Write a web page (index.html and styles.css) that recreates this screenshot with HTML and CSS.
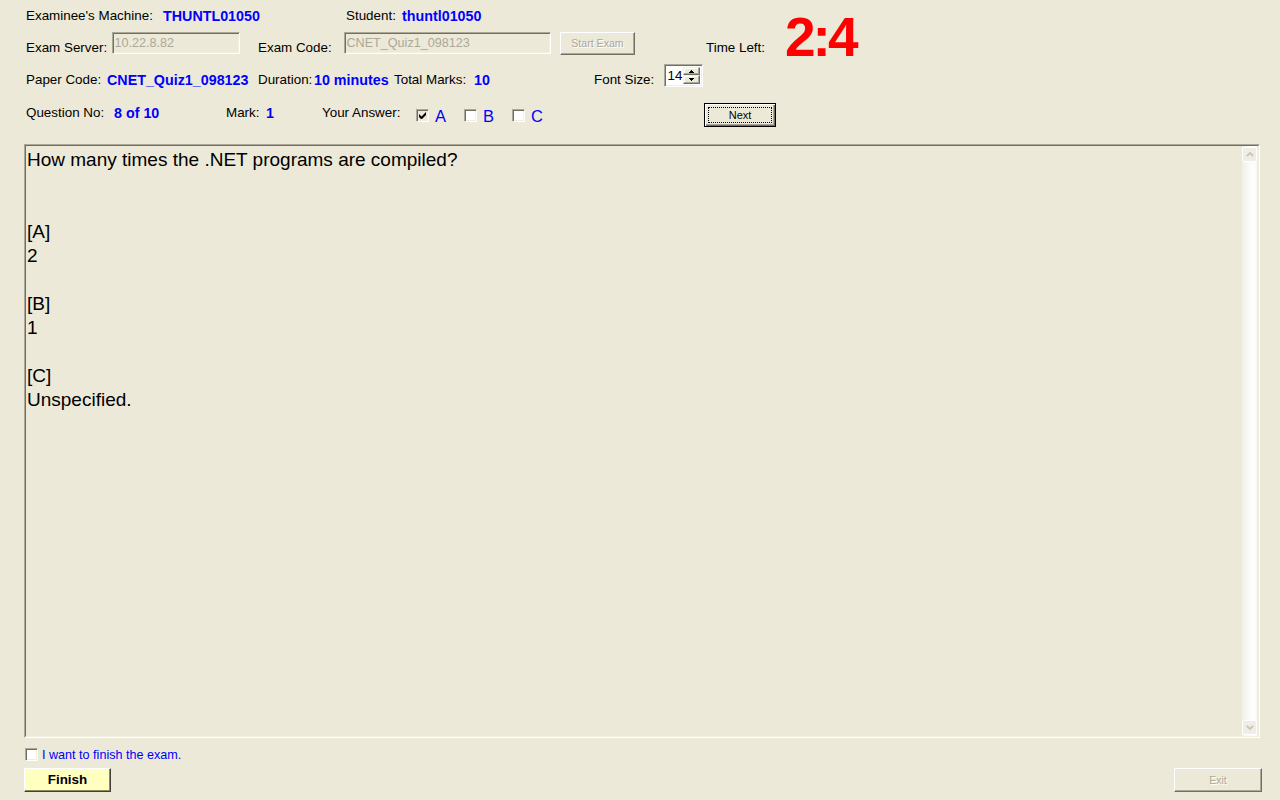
FILE: index.html
```html
<!DOCTYPE html>
<html>
<head>
<meta charset="utf-8">
<title>Exam</title>
<link rel="stylesheet" href="styles.css">
</head>
<body>
<div class="window">
  <header class="header">
    <div class="top">
      <div class="top-left">
        <div class="row row-1">
          <span class="label w-137">Examinee's Machine:</span>
          <span class="value w-183">THUNTL01050</span>
          <span class="label w-56">Student:</span>
          <span class="value">thuntl01050</span>
        </div>
        <div class="row row-2">
          <span class="label w-86">Exam Server:</span>
          <div class="field field-server">10.22.8.82</div>
          <span class="label w-86 gap-18">Exam Code:</span>
          <div class="field field-code">CNET_Quiz1_098123</div>
          <button class="btn btn-disabled btn-start">Start Exam</button>
        </div>
      </div>
      <span class="label time-label">Time Left:</span>
      <span class="timer">2:4</span>
    </div>

    <div class="row row-3">
      <span class="label w-81">Paper Code:</span>
      <span class="value w-151">CNET_Quiz1_098123</span>
      <span class="label w-56">Duration:</span>
      <span class="value w-80">10 minutes</span>
      <span class="label w-80">Total Marks:</span>
      <span class="value w-120">10</span>
      <span class="label w-70">Font Size:</span>
      <div class="spin">
        <span class="spin-value">14</span>
        <div class="spin-buttons">
          <span class="spin-btn"><svg width="5" height="3" viewBox="0 0 5 3"><path d="M2 0h1v1h1v1h1v1H0V2h1V1h1z" fill="#000"/></svg></span>
          <span class="spin-btn"><svg width="5" height="3" viewBox="0 0 5 3"><path d="M0 0h5v1H4v1H3v1H2V2H1V1H0z" fill="#000"/></svg></span>
        </div>
      </div>
    </div>

    <div class="row row-4">
      <span class="label w-88 pad-label">Question No:</span>
      <span class="value w-112 pad-value">8 of 10</span>
      <span class="label w-40 pad-label">Mark:</span>
      <span class="value w-56 pad-value">1</span>
      <span class="label w-94 pad-label">Your Answer:</span>
      <div class="answers">
        <label class="option">
          <span class="check check-on"><svg width="7" height="7" viewBox="0 0 7 7"><path d="M0 2v3l2 2h1l4-4V0L2.5 4.5z" fill="#000"/></svg></span>
          <span class="option-letter">A</span>
        </label>
        <label class="option">
          <span class="check"></span>
          <span class="option-letter">B</span>
        </label>
        <label class="option">
          <span class="check"></span>
          <span class="option-letter">C</span>
        </label>
      </div>
      <button class="btn btn-default">Next</button>
    </div>
  </header>

  <main class="question-box">
    <div class="question-inner">
      <div class="question-text">How many times the .NET programs are compiled?


[A]
2

[B]
1

[C]
Unspecified.</div>
      <div class="scrollbar">
        <span class="sb-btn"><svg width="8" height="5" viewBox="0 0 8 5"><polyline points="0.8,4.2 4,1 7.2,4.2" fill="none" stroke="#c8c5b6" stroke-width="1.8"/></svg></span>
        <span class="sb-track"></span>
        <span class="sb-btn"><svg width="8" height="5" viewBox="0 0 8 5"><polyline points="0.8,0.8 4,4 7.2,0.8" fill="none" stroke="#c8c5b6" stroke-width="1.8"/></svg></span>
      </div>
    </div>
  </main>

  <footer class="footer">
    <label class="finish-check">
      <span class="check"></span>
      <span class="finish-text">I want to finish the exam.</span>
    </label>
    <div class="footer-buttons">
      <button class="btn btn-finish">Finish</button>
      <button class="btn btn-disabled btn-exit">Exit</button>
    </div>
  </footer>
</div>
</body>
</html>
```

FILE: styles.css
```css
html, body {
  margin: 0;
  padding: 0;
  background: #ece9d8;
}

body {
  font-family: "Liberation Sans", Arial, sans-serif;
  color: #000;
}

.window {
  width: 1280px;
  height: 800px;
  overflow: hidden;
  box-sizing: border-box;
  padding-left: 24px;
}

/* ---------- header ---------- */
.header {
  padding-left: 2px;
}

.top {
  display: flex;
  align-items: flex-start;
  height: 56.4px;
}

.top-left {
  width: 654px;
  display: flex;
  flex-direction: column;
}

.row {
  display: flex;
}

.row-1 {
  height: 24.4px;
  align-items: flex-end;
}

.row-2 {
  height: 24.4px;
  margin-top: 7.6px;
  align-items: flex-end;
}

.row-3 {
  height: 24.4px;
  margin-top: 7.6px;
  align-items: flex-end;
}

.row-4 {
  height: 24px;
  margin-top: 14.6px;
  align-items: flex-start;
}

.label {
  font-size: 13.4px;
  line-height: 16px;
  white-space: nowrap;
  flex-shrink: 0;
}

.value {
  font-size: 14.3px;
  line-height: 16px;
  font-weight: bold;
  color: #0000ff;
  white-space: nowrap;
  flex-shrink: 0;
}

.pad-label { padding-top: 2px; }
.pad-value { padding-top: 1.6px; }

.w-40 { width: 40px; }
.w-56 { width: 56px; }
.w-70 { width: 70px; }
.w-80 { width: 80px; }
.w-81 { width: 81px; }
.w-86 { width: 86px; }
.w-88 { width: 88px; }
.w-94 { width: 94px; }
.w-112 { width: 112px; }
.w-120 { width: 120px; }
.w-137 { width: 137px; }
.w-151 { width: 151px; }
.w-183 { width: 183px; }
.gap-18 { margin-left: 18px; }

.field {
  align-self: flex-start;
  box-sizing: border-box;
  height: 22px;
  border: 1px solid;
  border-color: #aca899 #ffffff #ffffff #aca899;
  box-shadow: inset 1px 1px 0 #716f64, inset -1px -1px 0 #f1efe2;
  background: #ece9d8;
  color: #aca899;
  font-size: 12.6px;
  line-height: 12px;
  padding: 4px 2px 0 1.5px;
  white-space: nowrap;
  flex-shrink: 0;
}

.field-server { width: 128px; }
.field-code { width: 207px; }

.time-label {
  align-self: flex-end;
  margin-left: 26px;
  width: 79px;
}

.timer {
  align-self: flex-start;
  margin-top: 9px;
  font-size: 55px;
  line-height: 56px;
  font-weight: bold;
  color: #ff0000;
  letter-spacing: -3px;
  white-space: nowrap;
}

/* ---------- buttons ---------- */
.btn {
  box-sizing: border-box;
  font-family: "Liberation Sans", Arial, sans-serif;
  background: #ece9d8;
  border: 1px solid;
  border-color: #ffffff #716f64 #716f64 #ffffff;
  box-shadow: inset -1px -1px 0 #aca899;
  padding: 0;
  margin: 0;
  font-size: 10.6px;
  color: #000;
  flex-shrink: 0;
}

.btn-disabled {
  color: #aca899;
  text-shadow: 1px 1px 0 #ffffff;
}

.btn-start {
  align-self: flex-start;
  width: 75px;
  height: 23px;
  margin-left: 9px;
}

.btn-default {
  position: relative;
  width: 72px;
  height: 24px;
  border: 1px solid #000;
  box-shadow: inset 1px 1px 0 #ffffff, inset -1px -1px 0 #716f64, inset -2px -2px 0 #aca899;
  font-size: 11px;
}

.btn-default::after {
  content: "";
  position: absolute;
  left: 3px;
  top: 3px;
  right: 3px;
  bottom: 3px;
  border: 1px dotted #000;
}

/* ---------- spin ---------- */
.spin {
  align-self: flex-start;
  box-sizing: border-box;
  width: 39px;
  height: 23px;
  border: 1px solid;
  border-color: #aca899 #ffffff #ffffff #aca899;
  box-shadow: inset 1px 1px 0 #716f64, inset -1px -1px 0 #f1efe2;
  background: #ffffff;
  display: flex;
  padding: 2px 2px 2px 2px;
}

.spin-value {
  flex: 1;
  font-size: 13.4px;
  line-height: 17px;
  padding-left: 0.5px;
}

.spin-buttons {
  width: 17px;
  display: flex;
  flex-direction: column;
}

.spin-btn {
  flex: 1;
  box-sizing: border-box;
  background: #ece9d8;
  border: 1px solid;
  border-color: #f1efe2 #716f64 #716f64 #f1efe2;
  box-shadow: inset -1px -1px 0 #aca899, inset 1px 1px 0 #ffffff;
  display: flex;
  align-items: center;
  justify-content: center;
}

.spin-btn svg { display: block; }

/* ---------- answers ---------- */
.answers {
  width: 288px;
  display: flex;
  flex-shrink: 0;
}

.option {
  width: 48px;
  display: flex;
  align-items: flex-start;
}

.check {
  box-sizing: border-box;
  width: 13px;
  height: 13px;
  flex-shrink: 0;
  border: 1px solid;
  border-color: #aca899 #ffffff #ffffff #aca899;
  box-shadow: inset 1px 1px 0 #716f64, inset -1px -1px 0 #f1efe2;
  background: #ffffff;
  display: flex;
  align-items: center;
  justify-content: center;
}

.option .check {
  margin-top: 6px;
}

.check-on {
  background: #ece9d8;
}

.check svg {
  display: block;
  margin: 1px 0 0 0;
}

.option-letter {
  font-size: 16.5px;
  line-height: 18px;
  color: #0000ff;
  margin-left: 6px;
  margin-top: 4.3px;
}

/* ---------- question box ---------- */
.question-box {
  box-sizing: border-box;
  width: 1236px;
  height: 594px;
  margin-top: 17px;
  border: 1px solid;
  border-color: #aca899 #ffffff #ffffff #aca899;
  display: flex;
}

.question-inner {
  flex: 1;
  display: flex;
  border: 1px solid;
  border-color: #716f64 #f1efe2 #f1efe2 #716f64;
}

.question-text {
  flex: 1;
  white-space: pre-line;
  font-size: 19px;
  line-height: 24px;
  padding-top: 2px;
  padding-left: 1px;
}

.scrollbar {
  width: 15px;
  display: flex;
  flex-direction: column;
  background: linear-gradient(to right, #f2f0e8 0%, #f8f7f3 35%, #fefefd 70%, #fbfaf7 100%);
  margin-right: 1px;
}

.sb-btn {
  box-sizing: border-box;
  height: 15px;
  border: 1px solid #ffffff;
  border-radius: 2px;
  background: #efede5;
  display: flex;
  align-items: center;
  justify-content: center;
  margin-top: 1px;
}

.sb-btn:last-child {
  margin-top: 0;
  margin-bottom: 1px;
}

.sb-btn svg { display: block; }

.sb-track {
  flex: 1;
}

/* ---------- footer ---------- */
.footer {
  display: flex;
  flex-direction: column;
}

.finish-check {
  display: flex;
  align-items: flex-start;
  height: 16px;
  margin-top: 8.4px;
  margin-left: 1px;
}

.finish-check .check {
  margin-top: 1.6px;
}

.finish-text {
  font-size: 12.6px;
  line-height: 16px;
  color: #0000ff;
  margin-left: 4px;
  padding-top: 0.6px;
}

.footer-buttons {
  display: flex;
  justify-content: space-between;
  width: 1238px;
  margin-top: 5.6px;
}

.btn-finish {
  width: 87px;
  height: 24px;
  background: #ffffc0;
  border-color: #ffffff #404040 #404040 #ffffff;
  box-shadow: inset -1px -1px 0 #8a8a5c;
  font-size: 13.4px;
  font-weight: bold;
}

.btn-exit {
  width: 88px;
  height: 24px;
  font-size: 10.6px;
}
```
